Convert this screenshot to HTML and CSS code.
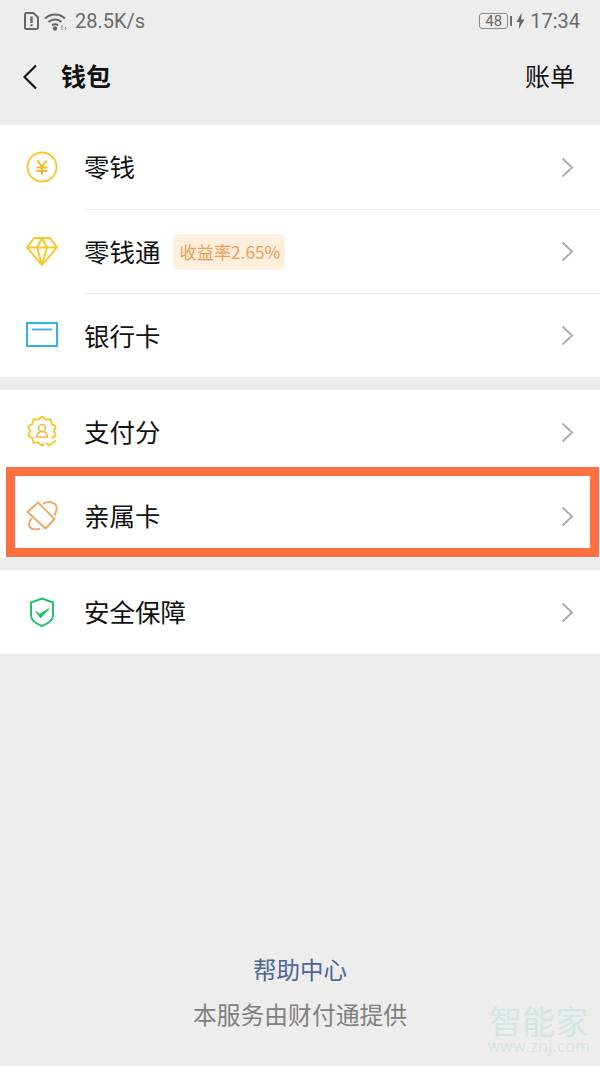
FILE: index.html
```html
<!DOCTYPE html>
<html>

<head>
  <meta charset="utf-8" />
  <meta name="viewport" content="width=device-width, initial-scale=1.0" />
  <title>钱包</title>
  <link rel="stylesheet" href="styles.css">
</head>

<body>
  <div class="page">
    <div class="status">
      <svg class="ic-sim" width="15" height="18" viewBox="0 0 15 18">
        <path d="M2.500 1h7l4.500 4.500v10a1.500 1.500 0 0 1-1.500 1.500h-10a1.500 1.500 0 0 1-1.500-1.500v-13a1.500 1.500 0 0 1 1.500-1.500z" fill="none" stroke="#666" stroke-width="2" />
        <path d="M7.500 4.500v6.500M7.500 12.200v2" stroke="#666" stroke-width="2.400" />
      </svg>
      <svg class="ic-wifi" width="24" height="19" viewBox="0 0 24 19">
        <path d="M1 6.500c5.500-5.500 14.500-5.500 20 0M4.500 10c3.500-3.500 9.500-3.500 13 0M8 13.500c1.700-1.600 4.300-1.600 6 0" fill="none" stroke="#666" stroke-width="2" />
        <circle cx="11" cy="16.500" r="2.200" fill="#666" />
        <path d="M18 13v5M21 15l1 1.500-1 1.500" fill="none" stroke="#8a8a8a" stroke-width="1" />
      </svg>
      <span class="speed">28.5K/s</span>
      <span class="status-right">
        <span class="batt">48</span><span class="batt-tip"></span>
        <svg class="ic-bolt" width="9" height="16" viewBox="0 0 9 16">
          <path d="M5.500 0L.5 9h3L2.800 16 8.500 6.500h-3.200z" fill="#666" />
        </svg>
        <span class="clock">17:34</span>
      </span>
    </div>

    <div class="nav">
      <svg class="back" width="16" height="26" viewBox="0 0 16 26">
        <path d="M14 1.500L2.500 13 14 24.500" fill="none" stroke="#1a1a1a" stroke-width="2.200" />
      </svg>
      <span class="nav-title">钱包</span>
      <span class="nav-link">账单</span>
    </div>

    <div class="group">
      <div class="row">
        <svg class="ic" width="32" height="32" viewBox="0 0 32 32">
          <circle cx="16" cy="16" r="14.500" fill="none" stroke="#f6c82b" stroke-width="1.800" />
          <path d="M11.500 9.500l4.500 6.500 4.500-6.500M10.500 16.500h11M10.500 20h11M16 16v7.500" fill="none" stroke="#f4b92a" stroke-width="2" />
        </svg>
        <div class="row-body">
          <span class="label">零钱</span>
          <svg class="arrow" width="13" height="21" viewBox="0 0 13 21">
            <path d="M1.500 1.500l9.500 9-9.500 9" fill="none" stroke="#adadad" stroke-width="2" />
          </svg>
        </div>
      </div>
      <div class="row">
        <svg class="ic" width="32" height="30" viewBox="0 0 32 30">
          <path d="M8 2h16l7 9.500-15 17.500-15-17.500zM1 11.500h30M11 11.500l5 17.500 5-17.500-5-9.500z" fill="none" stroke="#f6c82b" stroke-width="1.900" stroke-linejoin="round" />
        </svg>
        <div class="row-body">
          <span class="label">零钱通</span>
          <span class="badge">收益率2.65%</span>
          <svg class="arrow" width="13" height="21" viewBox="0 0 13 21">
            <path d="M1.500 1.500l9.500 9-9.500 9" fill="none" stroke="#adadad" stroke-width="2" />
          </svg>
        </div>
      </div>
      <div class="row">
        <svg class="ic" width="32" height="26" viewBox="0 0 32 26">
          <rect x="1" y="1" width="30" height="23" fill="none" stroke="#33b2e3" stroke-width="2" />
          <path d="M6 7.500h20" stroke="#33b2e3" stroke-width="1.800" />
        </svg>
        <div class="row-body">
          <span class="label">银行卡</span>
          <svg class="arrow" width="13" height="21" viewBox="0 0 13 21">
            <path d="M1.500 1.500l9.500 9-9.500 9" fill="none" stroke="#adadad" stroke-width="2" />
          </svg>
        </div>
      </div>
    </div>

    <div class="group">
      <div class="row">
        <svg class="ic" width="32" height="32" viewBox="0 0 32 32">
          <path d="M25.700 22.100L29.800 19.500 28 15 29.800 10.500 25.700 7.900 24.500 3.300 19.700 3.600 16 .5 12.300 3.600 7.500 3.300 6.300 7.900 2.200 10.500 4 15 2.200 19.500 6.300 22.100 7.500 26.700 12.300 26.400 16 29.500 18.500 28" fill="none" stroke="#f6c82b" stroke-width="1.900" stroke-linejoin="round" />
          <circle cx="16" cy="12" r="3.500" fill="none" stroke="#f0b94a" stroke-width="1.700" />
          <path d="M10.500 21c.5-3.500 2.500-5.500 5.500-5.500s5 2 5.500 5.500z" fill="none" stroke="#f0b94a" stroke-width="1.700" />
          <path d="M20 27l3 2.500 7-5" fill="none" stroke="#f6c82b" stroke-width="1.900" />
        </svg>
        <div class="row-body">
          <span class="label">支付分</span>
          <svg class="arrow" width="13" height="21" viewBox="0 0 13 21">
            <path d="M1.500 1.500l9.500 9-9.500 9" fill="none" stroke="#adadad" stroke-width="2" />
          </svg>
        </div>
      </div>
      <div class="row row-marked">
        <svg class="ic" width="32" height="30" viewBox="0 0 32 30">
          <path d="M12 1.500L28.500 18 19.500 27.500 1.500 11z" fill="none" stroke="#eda96a" stroke-width="1.900" stroke-linejoin="round" />
          <path d="M17 2.500c5-2 10-1.500 12.500 1 2 2.500 1 7-1 11M5.500 17c-2 3-3.500 7-1.500 9.500 2 2 5.500 2.500 10 1" fill="none" stroke="#eda96a" stroke-width="1.900" />
        </svg>
        <div class="row-body">
          <span class="label">亲属卡</span>
          <svg class="arrow" width="13" height="21" viewBox="0 0 13 21">
            <path d="M1.500 1.500l9.500 9-9.500 9" fill="none" stroke="#adadad" stroke-width="2" />
          </svg>
        </div>
      </div>
    </div>

    <div class="group">
      <div class="row">
        <svg class="ic" width="32" height="30" viewBox="0 0 32 30">
          <path d="M16 1.500l11 4v13c0 4.500-6 8.500-11 10.500-5-2-11-6-11-10.500v-13z" fill="none" stroke="#25c16f" stroke-width="2" />
          <path d="M10 14.500l3.500 3 9-5.500-8 8.500z" fill="#25c16f" stroke="#25c16f" stroke-width="1.200" stroke-linejoin="round" />
        </svg>
        <div class="row-body">
          <span class="label">安全保障</span>
          <svg class="arrow" width="13" height="21" viewBox="0 0 13 21">
            <path d="M1.500 1.500l9.500 9-9.500 9" fill="none" stroke="#adadad" stroke-width="2" />
          </svg>
        </div>
      </div>
    </div>

    <div class="footer">
      <div class="help">帮助中心</div>
      <div class="provider">本服务由财付通提供</div>
    </div>

    <div class="watermark">
      <div class="wm-name">智能家</div>
      <div class="wm-url">www.znj.com</div>
    </div>
  </div>
</body>

</html>
```

FILE: styles.css
```css
html,
body {
  margin: 0;
  padding: 0;
}

body {
  font-family: "Noto Sans CJK SC", "Noto Sans", sans-serif;
  color: #111;
  background: #ededed;
}

.page {
  position: relative;
  width: 600px;
  height: 1066px;
  display: flex;
  flex-direction: column;
  overflow: hidden;
}

.status {
  height: 42px;
  padding: 0 20px 0 24px;
  display: flex;
  align-items: center;
  color: #6b6b6b;
  font-family: Roboto, sans-serif;
  font-size: 20px;
}

.ic-sim {
  margin-right: 5px;
}

.speed {
  margin-left: 7px;
}

.status-right {
  margin-left: auto;
  display: flex;
  align-items: center;
}

.batt {
  width: 27px;
  height: 14px;
  border: 1.500px solid #8a8a8a;
  border-radius: 3px;
  font-size: 15px;
  line-height: 14px;
  text-align: center;
}

.batt-tip {
  width: 2px;
  height: 10px;
  margin-left: 2px;
  background: #6b6b6b;
}

.ic-bolt {
  margin: 0 5px 0 4px;
}

.nav {
  height: 69px;
  padding-bottom: 14px;
  display: flex;
  align-items: center;
  font-size: 25px;
}

.back {
  margin-left: 22px;
}

.nav-title {
  margin-left: 23px;
  margin-top: -4px;
  font-weight: 700;
}

.nav-link {
  margin-left: auto;
  margin-right: 25px;
  margin-top: -4px;
}

.group {
  background: #fff;
  margin-bottom: 13px;
}

.group:nth-of-type(4) {
  margin-bottom: 12px;
}

.row {
  height: 84px;
  display: flex;
  align-items: center;
}

.row .ic {
  flex: none;
  margin-left: 26px;
}

.row-body {
  flex: 1;
  height: 100%;
  margin-left: 26px;
  padding-right: 26px;
  display: flex;
  align-items: center;
}

.row + .row .row-body {
  border-top: 1px solid #ececec;
  box-sizing: border-box;
}

.label {
  margin-top: -3px;
  font-size: 25.500px;
  color: #111;
}

.arrow {
  margin-left: auto;
}

.badge {
  margin-left: 12px;
  padding: 0 5px 0 7px;
  height: 36px;
  line-height: 36px;
  border-radius: 6px;
  background: #fdeede;
  color: #eb9f55;
  font-size: 17.200px;
}

.row-marked {
  position: relative;
}

.row-marked .row-body {
  border-top: none !important;
}

/* orange annotation frame drawn over the row */
.row-marked::after {
  content: "";
  position: absolute;
  left: 6px;
  right: 1px;
  top: -7px;
  bottom: 1px;
  border: 9px solid #ff7043;
}

.footer {
  margin-top: auto;
  padding-bottom: 34px;
  text-align: center;
}

.help {
  font-size: 23.500px;
  line-height: 34px;
  color: #4d6694;
}

.provider {
  margin-top: 10px;
  font-size: 23.800px;
  line-height: 36px;
  color: #808080;
}

.watermark {
  position: absolute;
  right: 10px;
  bottom: 12px;
  text-align: center;
  color: #d5e4e6;
}

.wm-name {
  font-size: 33px;
  line-height: 34px;
}

.wm-url {
  margin-top: 2px;
  font-size: 16px;
  line-height: 15px;
  letter-spacing: 0.3px;
  font-family: "Open Sans", sans-serif;
}
```
